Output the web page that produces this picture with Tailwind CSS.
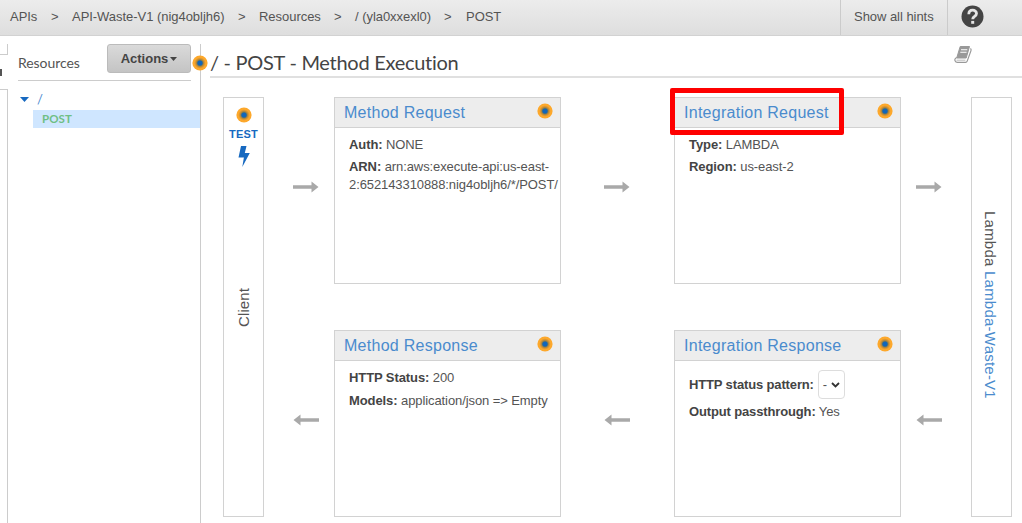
<!DOCTYPE html>
<html lang="en">
<head>
<meta charset="utf-8">
<title>API Gateway - Method Execution</title>
<script src="https://cdn.jsdelivr.net/npm/@tailwindcss/browser@4"></script>
</head>
<body class="h-[523px] w-[1022px] overflow-hidden bg-white font-['Liberation_Sans',Arial,sans-serif] text-[13px] text-[#545454]">
<svg class="absolute size-0">
  <defs>
    <radialGradient id="glow"><stop offset=".3" stop-color="#6b7355"/><stop offset=".6" stop-color="#dd9630"/><stop offset=".75" stop-color="#fda82b"/><stop offset="1" stop-color="#fda82b"/></radialGradient>
  </defs>
  <symbol id="dot" viewBox="0 0 16 16"><circle cx="8" cy="8" r="7.6" fill="url(#glow)"/><circle cx="8" cy="8" r="2.6" fill="#1166bb"/></symbol>
  <symbol id="arrow" viewBox="0 0 26 12"><path d="M0 4.300h18.500V.5L25.500 6l-7 5.500V7.700H0z" fill="#a9a9a9"/></symbol>
</svg>
<header class="flex h-9 items-stretch border-b border-[#d2d2d2] bg-linear-to-b from-[#ececec] to-[#dedede] pb-[2px] leading-[33px] tracking-[-.04px]">
  <nav class="flex grow pl-[10px]">
    <span class="w-[41px]">APIs</span><span class="w-[21px]">&gt;</span>
    <span class="w-[166px]">API-Waste-V1 (nig4obljh6)</span><span class="w-[21px]">&gt;</span>
    <span class="w-[75px]">Resources</span><span class="w-[21px]">&gt;</span>
    <span class="w-[89px]">/ (yla0xxexl0)</span><span class="w-[22px]">&gt;</span>
    <span>POST</span>
  </nav>
  <div class="-mb-[2px] w-[108px] border-x border-[#cbcbcb] pl-[13px]">Show all hints</div>
  <div class="w-[74px] pt-[5px] pl-[13px]">
    <svg class="size-[23px]" viewBox="0 0 23 23"><circle cx="11.500" cy="11.500" r="11" fill="#444"/><path d="M7.800 9.200c0-5.400 7.700-5 7.700-.6 0 2.900-3.800 2.700-3.800 5.600" fill="none" stroke="#e5e5e5" stroke-width="2.800"/><path d="M10.200 15.900h3v2.900h-3z" fill="#e5e5e5"/></svg>
  </div>
</header>
<div class="flex h-[487px]">
  <div class="flex w-[9px] shrink-0 flex-col pt-2">
    <div class="h-[11px] w-[8px] border-r border-b border-[#ccc]"></div>
    <div class="mt-[14px] h-[7px] w-[2px] bg-[#555]"></div>
    <div class="mt-[13px] w-[8px] grow border-t border-r border-[#ccc]"></div>
  </div>
  <aside class="mt-2 w-[192px] shrink-0 border-r border-[#ccc]">
    <div class="ml-[9px] flex h-[37px] w-[173px] justify-between border-b border-[#ccc]">
      <span class="pt-[9px] font-[Lato,sans-serif] text-[14px] leading-[19px] tracking-[-.05px]">Resources</span>
      <button class="flex h-[29px] w-[84px] items-center justify-center gap-[2px] rounded-[3px] border border-[#bbb] bg-linear-to-b from-[#dadada] to-[#c4c4c4] font-bold text-[#444]">Actions<svg class="h-[4px] w-[7px]" viewBox="0 0 7 4"><path d="M0 0h7L3.500 4z" fill="#444"/></svg></button>
    </div>
    <div class="flex h-[29px] items-center pt-[7px] pl-[11px] text-[#4a8bd0]"><svg class="mr-[8px] h-[5px] w-[9px]" viewBox="0 0 9 5"><path d="M0 0h9L4.500 5z" fill="#1769c0"/></svg><span class="font-[Lato,sans-serif] text-[13px] leading-none">/</span></div>
    <div class="ml-[24px] h-[18px] bg-[#cfe6ff] pl-[9px] font-[Lato,sans-serif] text-[11.500px] leading-[18px] font-bold tracking-[.1px] text-[#6fbf85]">POST</div>
  </aside>
  <main class="relative grow">
    <svg class="absolute top-[19px] -left-[9px] size-4"><use href="#dot"/></svg>
    <div class="ml-[9px] flex h-[42px] justify-between border-b-2 border-[#e0e0e0]">
      <h1 class="pt-[13px] font-[Lato,sans-serif] text-[20px] leading-[26px] tracking-[-.28px] text-[#444]">/ - POST - Method Execution</h1>
      <svg class="mt-[9px] mr-[49px] h-[20px] w-[20px]" viewBox="0 0 20 20"><path d="M7.200 1.500h9.300l-3.300 11.500H3.700z" fill="#999" stroke="#999" stroke-linejoin="round"/><path d="M8 4.700h6.300M7.300 7.200h6.300" stroke="#fff" stroke-width="1.100"/><path d="M3.600 12.500Q1 14 2.200 16q.5 1.300 2.200 1.300h8.200q1.200 0 1.600-1.200L18 5.600q.4-1.400-.6-2" fill="none" stroke="#999" stroke-width="1.200"/><path d="M3.500 15.200h8.900" stroke="#aaa" stroke-width=".8"/></svg>
    </div>
    <div class="flex pt-[19px] pl-[22px]">
      <section class="flex h-[420px] w-[41px] flex-col items-center border border-[#d2d2d2] pt-[9px]">
        <svg class="size-4"><use href="#dot"/></svg>
        <div class="mt-[3px] text-[11px] leading-[16px] font-bold tracking-[.2px] text-[#1769c0]">TEST</div>
        <svg class="mt-[4px] h-[21px] w-[12px]" viewBox="0 0 12 21"><path d="M3 0h5.500L6.800 7h5L4.300 21l1.600-9.500H.5z" fill="#1769c0"/></svg>
        <div class="mt-[121px] rotate-180 text-[15px] leading-[18px] tracking-[.1px] [writing-mode:vertical-rl]">Client</div>
      </section>
      <div class="flex w-[70px] flex-col pt-[84px] pl-[29px]"><svg class="h-3 w-[26px]"><use href="#arrow"/></svg><svg class="mt-[221px] h-3 w-[26px] rotate-180"><use href="#arrow"/></svg></div>
      <div class="flex w-[227px] flex-col gap-[46px] tracking-[-.09px]">
        <section class="h-[187px] border border-[#d2d2d2]">
          <h2 class="flex h-[30px] justify-between border-b border-[#d2d2d2] bg-[#ededed] pt-[5px] pr-[7px] pl-[9px] text-[16px] leading-[20px] tracking-[.27px] text-[#4a8bcd]">Method Request<svg class="size-4"><use href="#dot"/></svg></h2>
          <p class="mt-[8px] ml-[14px] leading-[18px]"><b class="text-[#444]">Auth:</b> NONE</p>
          <p class="mt-[4px] ml-[14px] leading-[18px] whitespace-nowrap"><b class="text-[#444]">ARN:</b> arn:aws:execute-api:us-east-<br>2:652143310888:nig4obljh6/*/POST/</p>
        </section>
        <section class="h-[187px] border border-[#d2d2d2]">
          <h2 class="flex h-[30px] justify-between border-b border-[#d2d2d2] bg-[#ededed] pt-[5px] pr-[7px] pl-[9px] text-[16px] leading-[20px] tracking-[.27px] text-[#4a8bcd]">Method Response<svg class="size-4"><use href="#dot"/></svg></h2>
          <p class="mt-[8px] ml-[14px] leading-[18px]"><b class="text-[#444]">HTTP Status:</b> 200</p>
          <p class="mt-[5px] ml-[14px] leading-[18px]"><b class="text-[#444]">Models:</b> application/json =&gt; Empty</p>
        </section>
      </div>
      <div class="flex w-[113px] flex-col pt-[84px] pl-[43px]"><svg class="h-3 w-[26px]"><use href="#arrow"/></svg><svg class="mt-[221px] h-3 w-[26px] rotate-180"><use href="#arrow"/></svg></div>
      <div class="flex w-[227px] flex-col gap-[46px] tracking-[-.09px]">
        <section class="relative h-[187px] border border-[#d2d2d2]">
          <h2 class="flex h-[30px] justify-between border-b border-[#d2d2d2] bg-[#ededed] pt-[5px] pr-[7px] pl-[9px] text-[16px] leading-[20px] tracking-[.27px] text-[#4a8bcd]">Integration Request<svg class="size-4"><use href="#dot"/></svg></h2>
          <p class="mt-[8px] ml-[14px] leading-[18px]"><b class="text-[#444]">Type:</b> LAMBDA</p>
          <p class="mt-[4px] ml-[14px] leading-[18px]"><b class="text-[#444]">Region:</b> us-east-2</p>
          <div class="absolute -top-[10px] -left-[5px] h-[47px] w-[174px] rounded-[2px] border-[5px] border-[#fe0000]"></div>
        </section>
        <section class="h-[187px] border border-[#d2d2d2]">
          <h2 class="flex h-[30px] justify-between border-b border-[#d2d2d2] bg-[#ededed] pt-[5px] pr-[7px] pl-[9px] text-[16px] leading-[20px] tracking-[.27px] text-[#4a8bcd]">Integration Response<svg class="size-4"><use href="#dot"/></svg></h2>
          <div class="mt-[9px] ml-[14px] flex items-center"><b class="tracking-[-.14px] text-[#444]">HTTP status pattern:</b><span class="ml-[4px] flex h-[29px] w-[27px] items-center justify-between rounded-[4px] border border-[#ddd] px-[4px]">-<svg class="h-[6px] w-[9px]" viewBox="0 0 9 6"><path d="M1 1l3.500 3.500L8 1" fill="none" stroke="#333" stroke-width="1.800"/></svg></span></div>
          <p class="mt-[4px] ml-[14px] leading-[18px] tracking-[-.14px]"><b class="text-[#444]">Output passthrough:</b> Yes</p>
        </section>
      </div>
      <div class="flex w-[70px] flex-col pt-[84px] pl-[15px]"><svg class="h-3 w-[26px]"><use href="#arrow"/></svg><svg class="mt-[221px] h-3 w-[26px] rotate-180"><use href="#arrow"/></svg></div>
      <section class="flex h-[420px] w-[41px] items-start border border-[#d2d2d2] pt-[113px] pl-[8px]">
        <div class="text-[15px] leading-[20px] tracking-[.23px] whitespace-nowrap [writing-mode:vertical-rl]">Lambda <span class="text-[#4a8bcd]">Lambda-Waste-V1</span></div>
      </section>
    </div>
  </main>
</div>
</body>
</html>
